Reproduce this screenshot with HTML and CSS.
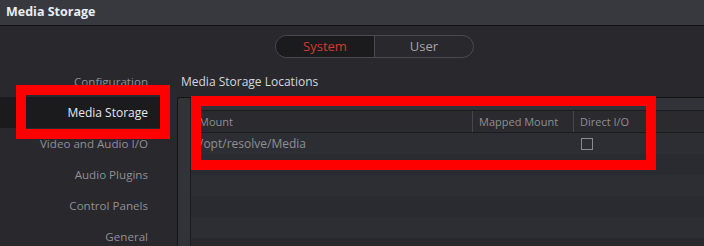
FILE: index.html
```html
<!DOCTYPE html>
<html lang="en">
<head>
  <meta charset="UTF-8" />
  <title>Media Storage</title>
  <link rel="stylesheet" href="styles.css">
</head>
<body>
  <header class="titlebar">Media Storage</header>

  <div class="toggle-row">
    <div class="toggle">
      <span class="toggle-item active">System</span>
      <span class="toggle-item">User</span>
    </div>
  </div>

  <div class="main">
    <nav class="sidebar">
      <a>Configuration</a>
      <a class="selected">Media Storage</a>
      <a>Video and Audio I/O</a>
      <a>Audio Plugins</a>
      <a>Control Panels</a>
      <a>General</a>
    </nav>

    <section class="content">
      <h3 class="section-title">Media Storage Locations</h3>
      <div class="panel">
        <div class="gutter"></div>
        <div class="table">
          <div class="table-top"></div>
          <div class="row head">
            <div class="cell c-mount">Mount</div>
            <div class="cell c-mapped">Mapped Mount</div>
            <div class="cell c-direct">Direct I/O</div>
          </div>
          <div class="row">
            <div class="cell c-mount">/opt/resolve/Media</div>
            <div class="cell c-mapped"></div>
            <div class="cell c-direct"><span class="checkbox"></span></div>
          </div>
          <div class="row"></div>
          <div class="row"></div>
          <div class="row"></div>
          <div class="row"></div>
        </div>
      </div>
    </section>
  </div>

  <div class="mark mark-nav"></div>
  <div class="mark mark-table"></div>
</body>
</html>
```

FILE: styles.css
```css
* {
  margin: 0;
  padding: 0;
  box-sizing: border-box;
}
body {
  width: 704px;
  height: 246px;
  overflow: hidden;
  position: relative;
  background: #28282d;
  font-family: 'Open Sans', sans-serif;
  font-size: 12px;
  color: #8e8f95;
}

.titlebar {
  height: 26px;
  line-height: 24px;
  padding-left: 6px;
  background: #38393e;
  border-bottom: 1px solid #111113;
  color: #e9eef4;
  font-size: 12.5px;
  font-weight: 700;
}

.toggle-row {
  height: 40px;
  padding-top: 9px;
  padding-left: 275px;
}
.toggle {
  display: flex;
  width: 199px;
  height: 23px;
  border: 1px solid #4a4b51;
  border-radius: 12px;
  overflow: hidden;
}
.toggle-item {
  flex: 1;
  text-align: center;
  line-height: 21px;
  font-size: 13px;
  color: #a3a5ad;
}
.toggle-item.active {
  background: #1b1b1e;
  color: #d23a33;
  border-right: 1px solid #4a4b51;
}

.main {
  display: flex;
}
.sidebar {
  width: 160px;
  display: flex;
  flex-direction: column;
}
.sidebar a {
  height: 31px;
  line-height: 31px;
  padding-right: 12px;
  text-align: right;
  color: #8e9096;
  font-size: 11.6px;
}
.sidebar a.selected {
  background: #1b1b1d;
  color: #e4e8ee;
  font-size: 12px;
}

.content {
  flex: 1;
  margin-left: 17px;
}
.section-title {
  height: 31px;
  line-height: 31px;
  padding-left: 4px;
  font-size: 12px;
  font-weight: 400;
  color: #d5d8de;
}
.panel {
  display: flex;
  height: 149px;
  overflow: hidden;
  border-top: 1px solid #141416;
  border-left: 1px solid #141416;
  border-top-left-radius: 3px;
}
.gutter {
  width: 13px;
  background: #323338;
  border-right: 1px solid #1c1c20;
}
.table {
  flex: 1;
}
.table-top {
  height: 13px;
  background: #323338;
  border-bottom: 1px solid #1c1c20;
}
.row {
  display: flex;
  height: 21px;
  background: #2a2b30;
}
.row:nth-child(odd) {
  background: #2d2e33;
}
.row.head {
  background: #2a2a2f;
  border-bottom: 1px solid #1c1c20;
  height: 22px;
  font-size: 11px;
}
.cell {
  line-height: 21px;
  padding-left: 8px;
  white-space: nowrap;
}
.c-mount {
  width: 281px;
}
.c-mapped {
  width: 101px;
}
.c-direct {
  flex: 1;
}
.head .c-mapped,
.head .c-direct {
  border-left: 1px solid #47484e;
  padding-left: 6px;
}
.checkbox {
  display: inline-block;
  width: 12px;
  height: 12px;
  margin-top: 5px;
  border: 1px solid #8a8b90;
  vertical-align: top;
}

.mark {
  position: absolute;
  border: 10px solid #ff0000;
}
.mark-nav {
  left: 16px;
  top: 85px;
  width: 154px;
  height: 54px;
}
.mark-table {
  left: 191px;
  top: 96px;
  width: 465px;
  height: 74px;
}
```
